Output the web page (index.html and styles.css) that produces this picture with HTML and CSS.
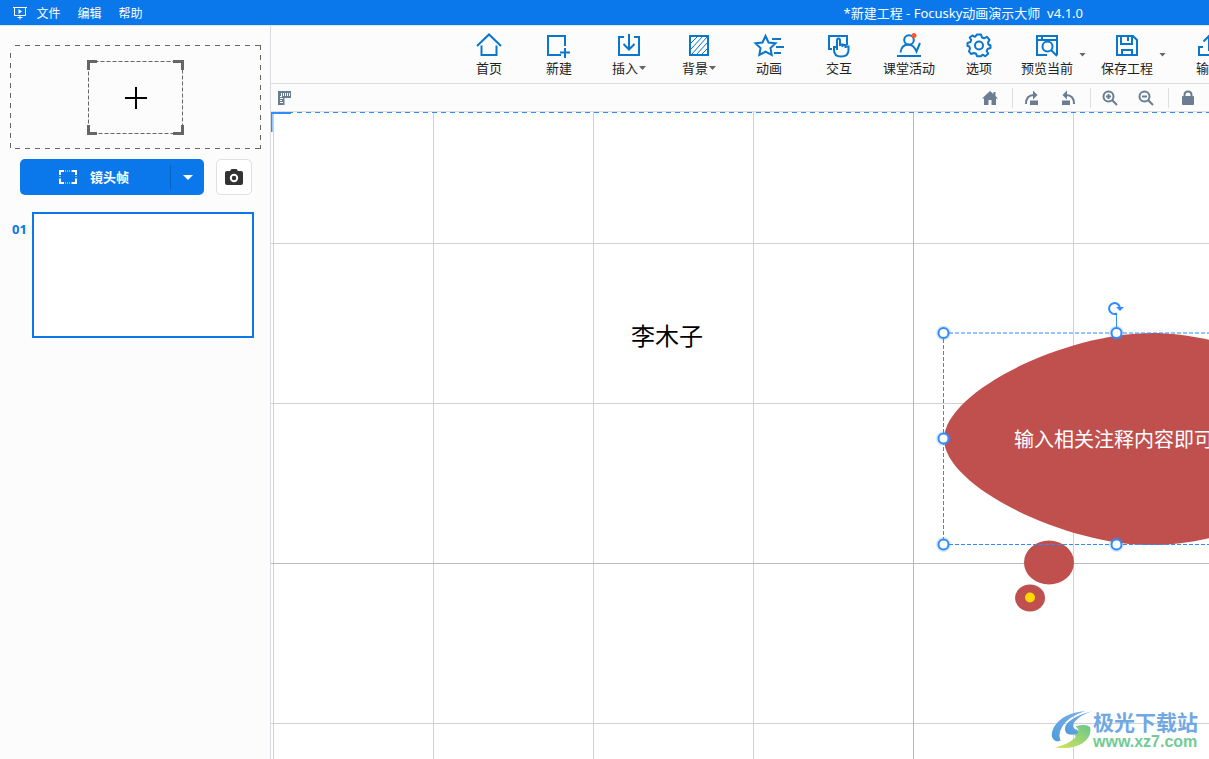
FILE: index.html
```html
<!DOCTYPE html>
<html lang="zh-CN">
<head>
<meta charset="utf-8">
<meta name="viewport" content="width=device-width, initial-scale=1">
<title>Focusky动画演示大师</title>
<link rel="stylesheet" href="styles.css">
</head>
<body>
<div class="app">
  <header class="titlebar">
    <svg class="app-icon" width="14" height="14" viewBox="0 0 14 14" fill="none" stroke="#fff"><path d="M0 1.500h14M1.500 1.500v8h11v-8M7 9.500v4M4.500 11.500H9.500"/><path d="M5.500 3l3.500 2.500l-3.500 2.500z" fill="#fff" stroke="none"/></svg>
    <nav class="menu">
      <button type="button">文件</button>
      <button type="button">编辑</button>
      <button type="button">帮助</button>
    </nav>
    <h1 class="title">*新建工程 - Focusky动画演示大师&nbsp; v4.1.0</h1>
  </header>

  <div class="body">
    <aside class="sidebar">
      <button class="dropzone" type="button" aria-label="添加帧">
        <svg width="98" height="76" viewBox="0 0 98 76" fill="none">
          <path d="M1.500 2.500h94v72h-94z" stroke="#666" stroke-dasharray="4 2"/>
          <path d="M1.500 11V2.500H10M86 2.500h9.500V11M1.500 66v8.500H10M86 74.500h9.500V66" stroke="#666" stroke-width="3"/>
          <path d="M38 39h22M49 28v22" stroke="#000" stroke-width="2"/>
        </svg>
      </button>
      <div class="frame-actions">
        <div class="frame-split">
          <button class="frame-main" type="button">
            <svg width="18" height="14" viewBox="0 0 18 14" fill="none" stroke="#fff"><path d="M1 5V1h4M13 1h4v4M17 9v4h-4M5 13H1V9" stroke-width="2"/><path d="M6 1h7M6 13h7M1 6v3M17 6v3" stroke-opacity=".5" stroke-width="2" stroke-dasharray="1 1"/></svg>
            <span>镜头帧</span>
          </button>
          <button class="frame-more" type="button" aria-label="更多帧">
            <svg width="10" height="5" viewBox="0 0 10 5"><path d="M0 0h10L5 5z" fill="#fff"/></svg>
          </button>
        </div>
        <button class="camera" type="button" aria-label="截图">
          <svg width="18" height="16" viewBox="0 0 18 16"><path d="M5 2l1.500-2h5L13 2h3q2 0 2 2v10q0 2-2 2H2q-2 0-2-2V4q0-2 2-2z" fill="#333"/><circle cx="9" cy="9" r="3.200" fill="none" stroke="#fff" stroke-width="2"/></svg>
        </button>
      </div>
      <ol class="frames">
        <li class="frame"><span class="frame-no">01</span><button class="thumb" type="button" aria-label="第 1 帧"></button></li>
      </ol>
    </aside>

    <main class="workspace">
      <div class="toolbar">
        <button class="tool" type="button">
          <svg viewBox="0 0 28 24"><path d="M2 13L14 1.500L26 13M6.500 12.500V22h15V12.500"/></svg><span>首页</span></button>
        <button class="tool" type="button">
          <svg viewBox="0 0 28 24"><path d="M16 22H3V3h17v10M20 15v10M15 19.500h10"/></svg><span>新建</span></button>
        <button class="tool" type="button">
          <svg viewBox="0 0 28 24"><path d="M9 4H4v18h20V4h-5M14 1v15M8.500 11l5.500 5.500l5.500-5.500"/></svg><span>插入<i class="caret"></i></span></button>
        <button class="tool" type="button">
          <svg viewBox="0 0 28 24"><path d="M5 3h18v19H5z"/><path d="M6 10l7-7M6 16L18 3M7 21L22 4M12 21l10-11M17 21l5-5" stroke-width="1"/></svg><span>背景<i class="caret"></i></span></button>
        <button class="tool" type="button">
          <svg viewBox="0 0 28 24"><path d="M10.500 3l3 6.500l7 .8l-5 4.700l1.200 7l-6.200-3.300l-6.200 3.300l1.200-7L.5 10.300l7-.8zM17 6h9M21 14h8M19 20h7"/></svg><span>动画</span></button>
        <button class="tool" type="button">
          <svg viewBox="0 0 28 24"><path d="M7 16H4V3h18v9M12 17V7.500q0-2 1.500-2t1.500 2V13M15 11.500h2.500V14M17.500 12h3V15M20.500 13.500h3V17q0 6.500-7.500 6.500q-7 0-7-6.500v-3H12"/></svg><span>交互</span></button>
        <button class="tool" type="button">
          <svg viewBox="0 0 28 24"><path d="M2 23h24M5.500 19.500q1-8 8-8q5 0 8 7L25 10"/><circle cx="14" cy="7" r="4.800"/><circle cx="19" cy="2.500" r="2.500" fill="#ff5533" stroke="none"/></svg><span>课堂活动</span></button>
        <button class="tool" type="button">
          <svg viewBox="0 0 28 24"><path d="M12 1.500h4l1 3l2 .8l3-1.500l2.500 3L23 9.500l.5 2l2 1v2.500l-3 1l-.8 2l1.500 2.700l-3 2.500l-2.700-1.500l-1.500 1.500h-4l-1-2.500l-2-.7l-3 1l-2-2.500l1-3l-.7-2L2.500 13v-3l3-1l.7-2L4.700 4.500l2.600-2l2.700 1.300z" stroke-linejoin="round"/><circle cx="14" cy="12.500" r="4"/></svg><span>选项</span></button>
        <div class="split">
          <button class="tool" type="button">
            <svg viewBox="0 0 28 24"><path d="M14 22H4V3h20v19M4 7h20M9 3v4"/><circle cx="14.500" cy="13.500" r="5"/><path d="M18 17l6 6"/></svg><span>预览当前</span></button>
          <button class="more" type="button" aria-label="更多预览"><i class="caret"></i></button>
        </div>
        <div class="split">
          <button class="tool" type="button">
            <svg viewBox="0 0 28 24"><path d="M4 3h16l4 4v15H4zM8 3v8h11V3M15 3v5M9 22v-5h10v5"/></svg><span>保存工程</span></button>
          <button class="more" type="button" aria-label="更多保存"><i class="caret"></i></button>
        </div>
        <button class="tool export" type="button">
          <svg viewBox="0 0 28 24"><path d="M8 14H4v8h20v-8h-4M14 18V3M8.500 8.500L14 3l5.500 5.500"/></svg><span>输出</span></button>
      </div>

      <div class="subbar">
        <button class="mini" type="button" aria-label="标尺"><svg width="14" height="14" viewBox="0 0 14 14"><path d="M0 0h13v7H6.500v7H0z" fill="#6b7d93"/><path d="M3.500 2v3M5.500 2v3M7.500 2v3M9.500 2v3M11.500 2v3M2 5.500h2M2 7.500h3M2 9.500h2M2 11.500h3" stroke="#fff"/></svg></button>
        <div class="mini-tools">
          <div class="mini-group"><button class="mini" type="button" aria-label="主视图"><svg width="16" height="16" viewBox="0 0 16 16"><path d="M8 1L0 8.500h2V15h4.500v-5h3v5H14V8.500h2L13.500 6V2h-2v2z" fill="#6b7d93"/></svg></button></div>
          <div class="mini-group">
            <button class="mini" type="button" aria-label="重做"><svg width="16" height="16" viewBox="0 0 16 16"><path d="M2 14Q2 5 10 5" fill="none" stroke="#6b7d93" stroke-width="2"/><path d="M9 .5L13.500 5L9 9.500zM6 10.500h8V15H6z" fill="#6b7d93"/></svg></button>
            <button class="mini" type="button" aria-label="撤销"><svg width="16" height="16" viewBox="0 0 16 16"><path d="M14 14Q14 5 6 5" fill="none" stroke="#6b7d93" stroke-width="2"/><path d="M7 .5L2.500 5L7 9.500zM2 10.500h8V15H2z" fill="#6b7d93"/></svg></button>
          </div>
          <div class="mini-group">
            <button class="mini" type="button" aria-label="放大"><svg width="16" height="16" viewBox="0 0 16 16" fill="none" stroke="#6b7d93" stroke-width="2"><circle cx="6.500" cy="6.500" r="5"/><path d="M10 10l5 5M6.500 4v5M4 6.500h5"/></svg></button>
            <button class="mini" type="button" aria-label="缩小"><svg width="16" height="16" viewBox="0 0 16 16" fill="none" stroke="#6b7d93" stroke-width="2"><circle cx="6.500" cy="6.500" r="5"/><path d="M10 10l5 5M4 6.500h5"/></svg></button>
          </div>
          <div class="mini-group"><button class="mini" type="button" aria-label="锁定"><svg width="14" height="16" viewBox="0 0 14 16"><path d="M3.500 7V5q0-3.500 3.500-3.500T10.500 5v2" fill="none" stroke="#6b7d93" stroke-width="2"/><rect x="1" y="6" width="12" height="9" rx="1" fill="#6b7d93"/></svg></button></div>
        </div>
      </div>

      <section class="canvas">
        <svg class="drawing" aria-hidden="true">
          <path d="M-1 .5h2000" stroke="#318cff" stroke-dasharray="5 4" fill="none"/>
          <path d="M.5 20V1H20" stroke="#318cff" stroke-width="2" fill="none"/>
          <g fill="#c0504d"><path d="M673 327C673 280 793 221 881 221S1089 280 1089 327S969 433 881 433S673 374 673 327z"/><ellipse cx="778" cy="450.500" rx="25" ry="22"/><ellipse cx="759" cy="486" rx="15" ry="13.500"/></g>
          <circle cx="759" cy="485.500" r="5" fill="#ffd900"/>
          <g stroke="#318cff" fill="none">
            <path d="M672.500 221V432" stroke="#3f86dc" stroke-dasharray="4 2"/>
            <path d="M672 432.500H1018" stroke-dasharray="4 2"/>
            <path d="M672 221H1018" stroke-width="2" stroke-opacity=".5" stroke-dasharray="4 2"/>
            <path d="M845.500 202v19"/>
            <path d="M849 196a5.500 5.500 0 1 0-3 5.500" stroke-width="2"/>
            <path d="M845 195h8l-4 4z" fill="#318cff" stroke="none"/>
          </g>
          <g stroke="#318cff" stroke-opacity=".2" stroke-width="5" fill="#fff"><circle cx="672.500" cy="221" r="5"/><circle cx="845.500" cy="221" r="5"/><circle cx="672.500" cy="326.500" r="5"/><circle cx="672.500" cy="432.500" r="5"/><circle cx="845.500" cy="432.500" r="5"/></g>
          <g stroke="#318cff" stroke-width="2" fill="#fff"><circle cx="672.500" cy="221" r="5"/><circle cx="845.500" cy="221" r="5"/><circle cx="672.500" cy="326.500" r="5"/><circle cx="672.500" cy="432.500" r="5"/><circle cx="845.500" cy="432.500" r="5"/></g>
        </svg>
        <p class="note name">李木子</p>
        <p class="note bubble">输入相关注释内容即可</p>
        <div class="brand">
          <svg width="42" height="40" viewBox="0 0 44 40">
            <defs>
              <linearGradient id="blue" x1="0" y1="1" x2="1" y2="0"><stop offset="0" stop-color="#4f9bdc"/><stop offset="1" stop-color="#7fb2e6"/></linearGradient>
              <linearGradient id="green" x1="0" y1="1" x2="1" y2="0"><stop offset="0" stop-color="#d8e558"/><stop offset="1" stop-color="#66c78d"/></linearGradient>
            </defs>
            <path d="M36 0Q12 2 3 17Q-3 30 7 32L10 31Q7 24 12 16Q18 6 36 0z" fill="url(#blue)"/>
            <path d="M26 16Q37 13 41 17Q43 27 33 34Q22 41 4 38Q16 36 23 30Q28 27 24 25Q32 22 26 16z" fill="url(#green)"/>
            <path d="M44 0Q20 6 15 16Q13 25 22 25L28 24Q30 20 25 19Q21 16 25 11Q31 4 44 0z" fill="url(#blue)"/>
          </svg>
          <div class="brand-text"><strong>极光下载站</strong><span>www.xz7.com</span></div>
        </div>
      </section>
    </main>
  </div>
</div>
</body>
</html>
```

FILE: styles.css
```css
* { box-sizing: border-box; }
body {
  margin: 0;
  font: 13px/16px "Noto Sans", "Noto Sans CJK SC", sans-serif;
  color: #222;
  background: #fcfcfc;
}
button { font: inherit; color: inherit; border: 0; padding: 0; background: none; }
svg { display: block; flex: none; }
.app { display: flex; flex-direction: column; height: 100vh; overflow: hidden; }

.titlebar {
  display: flex;
  align-items: center;
  flex: none;
  height: 25px;
  padding: 1px 126px 0 13px;
  background: #0a77ea;
  color: #fff;
}
.app-icon { margin-right: 9px; }
.menu { display: flex; gap: 16px; font-size: 12px; padding-top: 2px; }
.menu button { width: 25px; white-space: nowrap; }
.title { margin: 0 0 0 auto; font-size: 13px; font-weight: 400; white-space: nowrap; }

.body { display: flex; flex: 1; min-height: 0; border-top: 1px solid #dde6f0; }
.sidebar { flex: none; width: 271px; padding: 19px 9px 0 10px; border-right: 1px solid #d8dbdf; }
.dropzone {
  display: flex;
  align-items: center;
  justify-content: center;
  width: 251px;
  height: 104px;
  background:
    repeating-linear-gradient(90deg, #666 0 5px, transparent 5px 10px) 5px 0 / 100% 1px no-repeat,
    repeating-linear-gradient(90deg, #666 0 5px, transparent 5px 10px) 5px 100% / 100% 1px no-repeat,
    repeating-linear-gradient(#666 0 5px, transparent 5px 10px) 0 8px / 1px 100% no-repeat,
    repeating-linear-gradient(#666 0 5px, transparent 5px 10px) 100% 0 / 1px 100% no-repeat;
}
.frame-actions { display: flex; gap: 12px; padding: 10px 0 0 10px; }
.frame-split { display: flex; align-items: center; width: 184px; height: 36px; border-radius: 5px; background: #0a77ea; color: #fff; }
.frame-main { display: flex; align-items: center; justify-content: center; gap: 13px; flex: 1; padding-left: 14px; padding-right: 16px; font-weight: 700; white-space: nowrap; }
.frame-more { display: flex; align-items: center; justify-content: center; width: 34px; height: 24px; border-left: 1px solid #0862c4; }
.camera { display: flex; align-items: center; justify-content: center; width: 36px; height: 36px; border: 1px solid #e0e0e0; border-radius: 5px; background: #fff; }
.frames { list-style: none; margin: 0; padding: 17px 0 0 2px; }
.frame { display: flex; }
.frame-no { width: 20px; padding-top: 9px; color: #0a77ea; font-weight: 700; }
.thumb { width: 222px; height: 126px; border: 2px solid #0a77ea; background: #fff; }

.workspace { display: flex; flex-direction: column; flex: 1; min-width: 0; }
.toolbar { display: flex; flex: none; height: 58px; padding-left: 183px; overflow: hidden; border-bottom: 1px solid #dedede; }
.tool { display: flex; flex-direction: column; align-items: center; flex: none; gap: 3px; width: 70px; padding-top: 7px; white-space: nowrap; }
.tool svg { width: 28px; height: 24px; overflow: visible; fill: none; stroke: #0a76cc; stroke-width: 2; }
.tool span { display: flex; align-items: center; }
.caret { width: 7px; height: 4px; margin-left: 1px; background: #666; clip-path: polygon(0 0, 100% 0, 50% 100%); }
.split { display: flex; flex: none; width: 80px; padding-left: 3px; }
.split .tool { width: 60px; }
.more { display: flex; align-items: center; justify-content: center; width: 10px; }
.export { width: 70px; }

.subbar { display: flex; align-items: center; justify-content: space-between; flex: none; height: 28px; padding: 0 13px 0 6px; border-bottom: 1px solid #dedede; }
.mini { display: flex; align-items: center; justify-content: center; width: 16px; height: 20px; }
.mini-tools { display: flex; }
.mini-group { display: flex; gap: 20px; padding: 0 14px 0 11px; }
.mini-group + .mini-group { border-left: 1px solid #dedede; }
.mini-group:last-child { padding-right: 0; }

.canvas {
  position: relative;
  flex: 1;
  overflow: hidden;
  background:
    linear-gradient(#b8b8b8, #b8b8b8) 642px 0 / 1px 100% no-repeat,
    linear-gradient(#b8b8b8, #b8b8b8) 0 451px / 100% 1px no-repeat,
    linear-gradient(90deg, #d2d2d2 1px, transparent 1px) 2px 0 / 160px 160px,
    linear-gradient(#d2d2d2 1px, transparent 1px) 0 131px / 160px 160px,
    #fff;
}
.drawing { position: absolute; inset: 0; width: 100%; height: 100%; }
.note { position: absolute; margin: 0; white-space: nowrap; }
.name { left: 360px; top: 208px; font-size: 24px; line-height: 32px; color: #000; }
.bubble { left: 743px; top: 313px; font: 400 20px/28px "Noto Sans CJK SC", sans-serif; color: #fff; }
.brand { position: absolute; right: 11px; bottom: 8px; display: flex; align-items: center; }
.brand-text { display: flex; flex-direction: column; }
.brand strong { font: 700 21px/24px "Noto Sans CJK SC", sans-serif; color: #70a8e4; }
.brand span { font: 700 16px/18px "Liberation Sans", sans-serif; color: #72cb92; }
```
